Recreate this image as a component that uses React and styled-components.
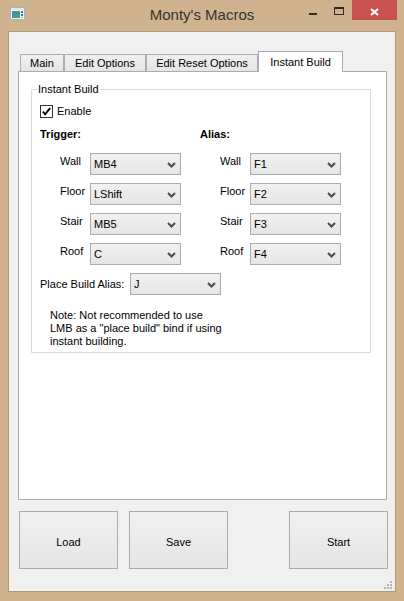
import React from 'react';
import styled, { createGlobalStyle } from 'styled-components';

const GlobalStyle = createGlobalStyle`
  html, body { margin: 0; padding: 0; background: #cfb38f; }
  body {
    font-family: 'Liberation Sans', Arial, sans-serif;
    font-size: 11px;
    color: #000;
  }
  * { box-sizing: border-box; }
`;

const Frame = styled.div`
  width: 404px;
  height: 601px;
  display: flex;
  flex-direction: column;
  background: #cfb38f;
  overflow: hidden;
`;

const TitleBar = styled.div`
  height: 31px;
  flex: none;
  display: grid;
  grid-template-columns: 1fr auto 1fr;
  align-items: start;
  padding: 0 7px;
`;

const AppIcon = styled.div`
  margin: 7px 0 0 3px;
  width: 15px;
  height: 13px;
`;

const Title = styled.div`
  font-size: 15px;
  line-height: 20px;
  padding-top: 5px;
  color: #333;
`;

const Controls = styled.div`
  display: flex;
  justify-content: flex-end;
  align-items: flex-start;
`;

const Control = styled.div`
  width: ${p => p.$w}px;
  height: 20px;
  display: flex;
  justify-content: center;
  align-items: flex-start;
  padding-top: ${p => p.$top}px;
  background: ${p => p.$bg || 'transparent'};
`;

const MinGlyph = styled.span`
  width: 8px;
  height: 2px;
  background: #2b2b2b;
`;

const MaxGlyph = styled.span`
  width: 10px;
  height: 8px;
  border: 1.5px solid #2b2b2b;
  border-top-width: 2.5px;
`;

const Client = styled.div`
  flex: 1;
  margin: 0 8px 9px 8px;
  background: #f0f0f0;
  border: 1px solid #b29a77;
  display: flex;
  flex-direction: column;
  padding: 19px 8px 0 9px;
  position: relative;
`;

const TabBar = styled.div`
  height: 20px;
  display: flex;
  align-items: flex-end;
  padding-left: 2px;
  position: relative;
  z-index: 1;
`;

const Tab = styled.div`
  width: ${p => p.$w}px;
  height: ${p => (p.$active ? 21 : 17)}px;
  margin-bottom: ${p => (p.$active ? -1 : 0)}px;
  border: 1px solid #acacac;
  border-bottom: none;
  background: ${p => (p.$active ? '#fff' : 'linear-gradient(#f0f0f0, #e5e5e5)')};
  text-align: center;
  padding-top: ${p => (p.$active ? 4 : 2)}px;
  line-height: 13px;
  white-space: nowrap;
`;

const Pane = styled.div`
  flex: 1;
  background: #fff;
  border: 1px solid #acacac;
  padding: 11px 15px 0 12px;
`;

const Group = styled.fieldset`
  margin: 0;
  padding: 0;
  min-width: 0;
  border: 1px solid #dcdcdc;
`;

const Legend = styled.legend`
  margin-left: 5px;
  padding: 0 1px;
  line-height: 13px;
`;

const GroupBody = styled.div`
  display: flex;
  flex-direction: column;
  padding: 9px 0 4px 8px;
`;

const CheckRow = styled.label`
  display: flex;
  align-items: center;
  gap: 4px;
  height: 13px;
  line-height: 13px;
`;

const CheckBox = styled.span`
  width: 13px;
  height: 13px;
  border: 1px solid #333;
  background: #fff;
  display: flex;
  align-items: center;
  justify-content: center;
`;

const Columns = styled.div`
  display: flex;
  margin-top: 10px;
`;

const Column = styled.div`
  width: ${p => p.$w}px;
  display: flex;
  flex-direction: column;
  gap: 8px;
`;

const Heading = styled.div`
  font-weight: bold;
  line-height: 13px;
  margin-bottom: 4px;
`;

const FieldRow = styled.div`
  display: flex;
  align-items: flex-start;
  padding-left: 20px;
`;

const FieldLabel = styled.span`
  width: ${p => p.$w || 30}px;
  line-height: 13px;
  padding-top: ${p => (p.$center ? 0 : 2)}px;
`;

const ComboBox = styled.div`
  width: 91px;
  height: 22px;
  border: 1px solid #acacac;
  background: linear-gradient(#f1f1f1, #e5e5e5);
  display: flex;
  align-items: center;
  justify-content: space-between;
  padding: 1px 4px 0 3px;
  line-height: 13px;
`;

const PlaceRow = styled.div`
  display: flex;
  align-items: center;
  margin-top: 8px;
`;

const Note = styled.div`
  margin-top: 14px;
  padding-left: 10px;
  line-height: 13px;
`;

const ButtonRow = styled.div`
  display: flex;
  gap: 11px;
  margin: 11px -1px 22px 0;
  padding-left: 1px;
`;

const PushButton = styled.button`
  width: 99px;
  height: 58px;
  border: 1px solid #acacac;
  background: linear-gradient(#f0f0f0, #e5e5e5);
  font-family: inherit;
  font-size: 11px;
  color: #000;
  padding: 3px 0 0;
  margin-left: ${p => (p.$push ? 'auto' : '0')};
`;

const Grip = styled.svg`
  position: absolute;
  right: 2px;
  bottom: 1px;
`;

const Chevron = () => (
  <svg width="9" height="6" viewBox="0 0 9 6">
    <polyline points="1,1 4.5,4.5 8,1" fill="none" stroke="#4a4a4a" strokeWidth="2" />
  </svg>
);

const Combo = ({ value }) => (
  <ComboBox>
    <span>{value}</span>
    <Chevron />
  </ComboBox>
);

const Field = ({ label, value }) => (
  <FieldRow>
    <FieldLabel>{label}</FieldLabel>
    <Combo value={value} />
  </FieldRow>
);

const trigger = [['Wall', 'MB4'], ['Floor', 'LShift'], ['Stair', 'MB5'], ['Roof', 'C']];
const alias = [['Wall', 'F1'], ['Floor', 'F2'], ['Stair', 'F3'], ['Roof', 'F4']];

const tabs = [
  { name: 'Main', w: 44 },
  { name: 'Edit Options', w: 82 },
  { name: 'Edit Reset Options', w: 112 },
  { name: 'Instant Build', w: 85, active: true },
];

export default function App() {
  return (
    <Frame>
      <GlobalStyle />
      <TitleBar>
        <AppIcon>
          <svg width="15" height="13" viewBox="0 0 15 13">
            <defs>
              <linearGradient id="ig" x1="0" y1="0" x2="1" y2="1">
                <stop offset="0" stopColor="#3f8fb5" />
                <stop offset="1" stopColor="#4aa36b" />
              </linearGradient>
            </defs>
            <rect x="0.5" y="0.5" width="14" height="12" fill="#f4f4f4" stroke="#a9b4ba" />
            <rect x="1" y="1" width="13" height="2" fill="#dfe6ea" />
            <rect x="2" y="4" width="8" height="7" fill="url(#ig)" />
            <rect x="11" y="4" width="2" height="2" fill="#3a78c0" />
            <rect x="11" y="7" width="2" height="2" fill="#3a78c0" />
            <rect x="11" y="10" width="2" height="1" fill="#9fb0bb" />
          </svg>
        </AppIcon>
        <Title>Monty's Macros</Title>
        <Controls>
          <Control $w={26} $top={13}><MinGlyph /></Control>
          <Control $w={26} $top={7}><MaxGlyph /></Control>
          <Control $w={45} $top={8} $bg="#c75050">
            <svg width="9" height="8" viewBox="0 0 9 8">
              <path d="M1 1 L8 7 M8 1 L1 7" stroke="#fff" strokeWidth="2" />
            </svg>
          </Control>
        </Controls>
      </TitleBar>

      <Client>
        <TabBar>
          {tabs.map(t => (
            <Tab key={t.name} $w={t.w} $active={t.active}>{t.name}</Tab>
          ))}
        </TabBar>
        <Pane>
          <Group>
            <Legend>Instant Build</Legend>
            <GroupBody>
              <CheckRow>
                <CheckBox>
                  <svg width="11" height="11" viewBox="0 0 11 11">
                    <path d="M1.8 5.6 L4.2 8.2 L9.2 2" fill="none" stroke="#000" strokeWidth="1.9" />
                  </svg>
                </CheckBox>
                Enable
              </CheckRow>
              <Columns>
                <Column $w={160}>
                  <Heading>Trigger:</Heading>
                  {trigger.map(([l, v]) => <Field key={l} label={l} value={v} />)}
                </Column>
                <Column $w={160}>
                  <Heading>Alias:</Heading>
                  {alias.map(([l, v]) => <Field key={l} label={l} value={v} />)}
                </Column>
              </Columns>
              <PlaceRow>
                <FieldLabel $w={90} $center>Place Build Alias:</FieldLabel>
                <Combo value="J" />
              </PlaceRow>
              <Note>
                Note: Not recommended to use<br />
                LMB as a "place build" bind if using<br />
                instant building.
              </Note>
            </GroupBody>
          </Group>
        </Pane>
        <ButtonRow>
          <PushButton>Load</PushButton>
          <PushButton>Save</PushButton>
          <PushButton $push>Start</PushButton>
        </ButtonRow>
        <Grip width="9" height="9" viewBox="0 0 9 9">
          {[[6, 0], [3, 3], [6, 3], [0, 6], [3, 6], [6, 6]].map(([x, y]) => (
            <rect key={`${x}-${y}`} x={x} y={y} width="2" height="2" fill="#b5b5b5" />
          ))}
        </Grip>
      </Client>
    </Frame>
  );
}
